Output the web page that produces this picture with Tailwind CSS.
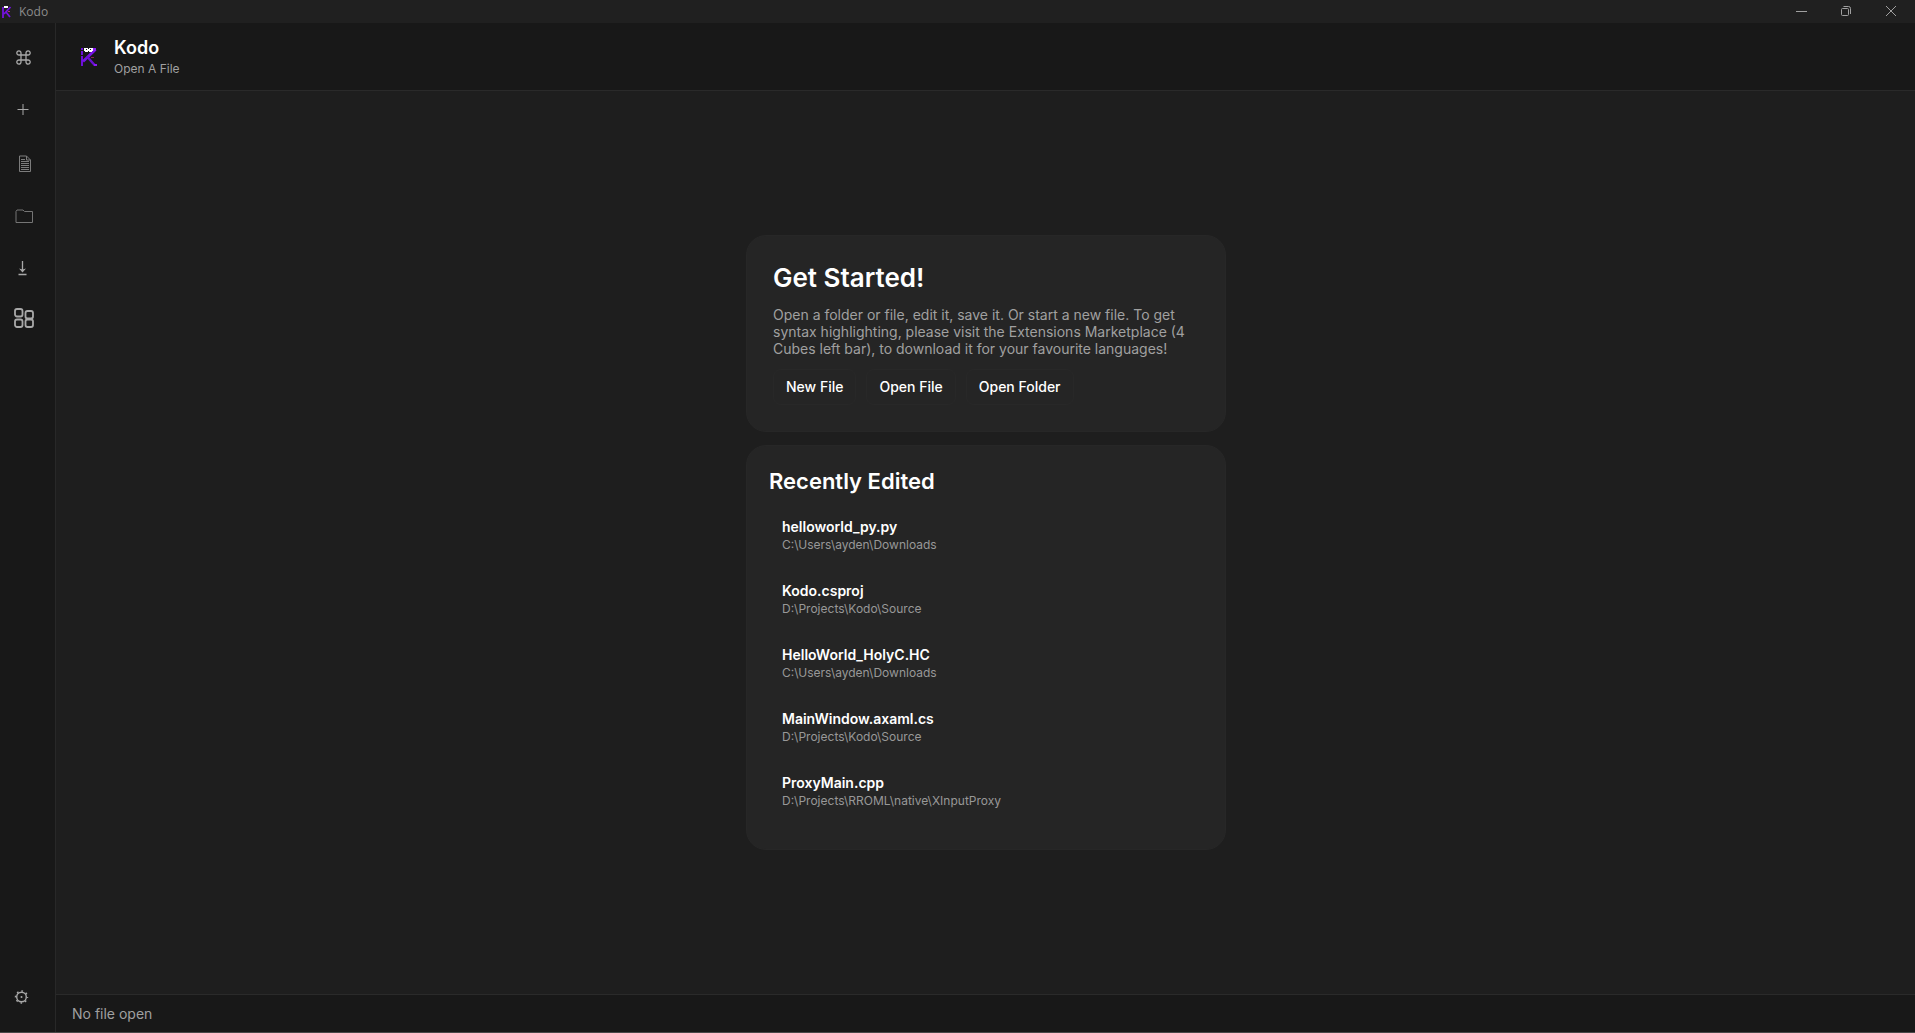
<!DOCTYPE html>
<html lang="en">
<head>
  <meta charset="UTF-8" />
  <meta name="viewport" content="width=device-width, initial-scale=1.0" />
  <title>Kodo</title>
  <script src="https://cdn.jsdelivr.net/npm/@tailwindcss/browser@4"></script>
</head>
<body class="bg-[#1e1e1e] text-white font-['Inter',sans-serif] [font-optical-sizing:none]">

<div class="h-screen flex flex-col border-b border-[#484848]">

  <!-- Title bar -->
  <div class="h-[23px] shrink-0 flex items-center bg-[#202020]">
    <svg class="w-3 h-3" viewBox="0 0 12 12">
      <path d="M3 1v11M10.500 1L4 8M6 6l4 5" stroke="#7412de" stroke-width="1.800" fill="none" />
      <path d="M4 0h4v2H4z" fill="#fff" />
      <path d="M8 5h2v1H8z" fill="#b03070" />
    </svg>
    <span class="ml-[7px] flex-1 font-['Open_Sans',sans-serif] text-[12px] leading-4 text-[#8c8c8c]">Kodo</span>
    <div class="h-full flex pr-px pb-0.5 text-[#a0a0a0]">
      <button aria-label="Minimize" class="w-[45px] flex items-center justify-center">
        <svg class="w-3 h-3" viewBox="0 0 12 12" fill="none" stroke="currentColor"><path d="M1 6.500h11" /></svg>
      </button>
      <button aria-label="Restore" class="w-[45px] flex items-center justify-center">
        <svg class="w-3 h-3" viewBox="0 0 12 12" fill="none" stroke="currentColor">
          <rect x="1.500" y="3.500" width="7" height="7" rx="1" />
          <path d="M3.500 1.500h5a2 2 0 0 1 2 2V9" />
        </svg>
      </button>
      <button aria-label="Close" class="w-[46px] flex items-center justify-center">
        <svg class="w-3 h-3" viewBox="0 0 12 12" fill="none" stroke="currentColor"><path d="M1 1l10 10M11 1L1 11" /></svg>
      </button>
    </div>
  </div>

  <div class="flex-1 min-h-0 flex">

    <!-- Side bar -->
    <nav class="w-14 shrink-0 flex flex-col items-center pt-2 pb-[9px] bg-[#181818] border-r border-[#282828] text-[#a8a8a8]">
      <button aria-label="Commands">
        <svg class="w-10 h-[52px]" viewBox="0 0 40 52" fill="none" stroke="currentColor" stroke-width="1.300">
          <path d="M13 24h5v5h-5zM13 24h-2a2.100 2.100 0 1 1 2-2zM18 24v-2a2.100 2.100 0 1 1 2 2zM18 29h2a2.100 2.100 0 1 1-2 2zM13 29v2a2.100 2.100 0 1 1-2-2z" />
        </svg>
      </button>
      <button aria-label="New file">
        <svg class="w-10 h-[52px]" viewBox="0 0 40 52" fill="none" stroke="currentColor"><path d="M9.500 26.500h11M15 21v11" /></svg>
      </button>
      <button aria-label="Open file">
        <svg class="w-10 h-[52px]" viewBox="0 0 40 52" fill="none" stroke="#7c7c7c">
          <path d="M11.500 21h7l4 4v11.500h-11zM18.500 21v4h4M13 24.500h4M13 26.500h8M13 28.500h8M13 30.500h8M13 32.500h8M13 34.500h8" />
        </svg>
      </button>
      <button aria-label="Open folder">
        <svg class="w-10 h-[52px]" viewBox="0 0 40 52" fill="none" stroke="#757575">
          <path d="M8 35.500v-11l1-1.500h6l1.500 1.500h8v11z" />
        </svg>
      </button>
      <button aria-label="Save">
        <svg class="w-10 h-[52px]" viewBox="0 0 40 52" fill="none" stroke="currentColor" stroke-width="1.300">
          <path d="M14.500 22v10M10.500 35.500h8" />
          <path d="M11 29.500l3.500 4 3.500-4-3.500 1z" fill="currentColor" stroke="none" />
        </svg>
      </button>
      <button aria-label="Extensions">
        <svg class="w-10 h-[52px]" viewBox="0 0 40 52" fill="none" stroke="currentColor" stroke-width="1.800">
          <rect x="7" y="18" width="7.500" height="7.500" rx="2" />
          <rect x="17.500" y="20" width="7.500" height="7.500" rx="2" />
          <rect x="7" y="28.500" width="7.500" height="7.500" rx="2" />
          <rect x="17.500" y="28.500" width="7.500" height="7.500" rx="2" />
        </svg>
      </button>
      <button aria-label="Settings" class="mt-auto">
        <svg class="w-10 h-[52px]" viewBox="0 0 40 52" fill="none" stroke="currentColor">
          <circle cx="13.500" cy="26" r="4.800" stroke-width="1.400" />
          <circle cx="13.500" cy="26" r="6" stroke-width="1.400" stroke-dasharray="1.700 3.012" stroke-dashoffset=".85" />
          <circle cx="13.500" cy="26" r="1" fill="currentColor" stroke="none" />
        </svg>
      </button>
    </nav>

    <div class="flex-1 min-w-0 flex flex-col">

      <header class="h-[68px] shrink-0 flex items-center pl-6 bg-[#181818] border-b border-[#2a2a2a]">
        <svg class="w-[18px] h-5" viewBox="0 0 18 20">
          <path d="M2 1v2M2 4v4M2 9v10" stroke="#6d10d8" stroke-width="2" fill="none" />
          <path d="M15.500 2.500L3 14.500" stroke="#7612e6" stroke-width="2.800" fill="none" />
          <path d="M7 9.500l8 9" stroke="#6a10d2" stroke-width="2.400" fill="none" />
          <path d="M13 1h3v3h-3zM14 17h3v2h-3z" fill="#8a1cf5" />
          <path d="M4 1h4v1h1V1h4v3h-1v1H9V4H8v1H5V4H4z" fill="#fff" />
          <path d="M6 2h1v1H6zM10 2h1v1h-1z" fill="#181818" />
          <path d="M11 10h3v1h-3z" fill="#8a2458" />
        </svg>
        <div class="ml-4">
          <h1 class="text-[18px] leading-[22px] font-semibold">Kodo</h1>
          <p class="mt-0.5 text-[12px] leading-[15px] text-[#a0a0a0]">Open A File</p>
        </div>
      </header>

      <main class="flex-1 min-h-0 flex flex-col items-center justify-center gap-[13px] pl-px">

        <section class="w-[480px] max-w-full rounded-[20px] bg-[#252525] border border-[#272727] p-[26px]">
          <h2 class="text-[26px] leading-8 font-semibold">Get Started!</h2>
          <p class="mt-3 text-[14px] leading-[17px] text-[#a0a0a0]">Open a folder or file, edit it, save it. Or start a new file. To get syntax highlighting, please visit the Extensions Marketplace (4 Cubes left bar), to download it for your favourite languages!</p>
          <div class="mt-3 flex gap-[10px] text-[14px] leading-4 font-medium">
            <button class="px-3 py-[9px] rounded-lg border border-[#282828]">New File</button>
            <button class="px-3 py-[9px] rounded-lg border border-[#282828]">Open File</button>
            <button class="px-3 py-[9px] rounded-lg border border-[#282828]">Open Folder</button>
          </div>
        </section>

        <section class="w-[480px] max-w-full rounded-[20px] bg-[#252525] border border-[#272727] px-[22px] pt-[21px] pb-[30px]">
          <h2 class="text-[22px] leading-7 font-semibold">Recently Edited</h2>
          <ul class="mt-3 flex flex-col gap-2">
            <li><button class="w-full h-14 px-[13px] text-left">
              <span class="block text-[14px] leading-[17px] font-semibold">helloworld_py.py</span>
              <span class="block mt-0.5 text-[12px] leading-[15px] text-[#989898]">C:\Users\ayden\Downloads</span>
            </button></li>
            <li><button class="w-full h-14 px-[13px] text-left">
              <span class="block text-[14px] leading-[17px] font-semibold">Kodo.csproj</span>
              <span class="block mt-0.5 text-[12px] leading-[15px] text-[#989898]">D:\Projects\Kodo\Source</span>
            </button></li>
            <li><button class="w-full h-14 px-[13px] text-left">
              <span class="block text-[14px] leading-[17px] font-semibold">HelloWorld_HolyC.HC</span>
              <span class="block mt-0.5 text-[12px] leading-[15px] text-[#989898]">C:\Users\ayden\Downloads</span>
            </button></li>
            <li><button class="w-full h-14 px-[13px] text-left">
              <span class="block text-[14px] leading-[17px] font-semibold">MainWindow.axaml.cs</span>
              <span class="block mt-0.5 text-[12px] leading-[15px] text-[#989898]">D:\Projects\Kodo\Source</span>
            </button></li>
            <li><button class="w-full h-14 px-[13px] text-left">
              <span class="block text-[14px] leading-[17px] font-semibold">ProxyMain.cpp</span>
              <span class="block mt-0.5 text-[12px] leading-[15px] text-[#989898]">D:\Projects\RROML\native\XInputProxy</span>
            </button></li>
          </ul>
        </section>

      </main>

      <footer class="h-[38px] shrink-0 flex items-center pl-4 bg-[#181818] border-t border-[#2a2a2a] text-[14px] leading-[17px] text-[#a0a0a0]">No file open</footer>
    </div>
  </div>
</div>

</body>
</html>
